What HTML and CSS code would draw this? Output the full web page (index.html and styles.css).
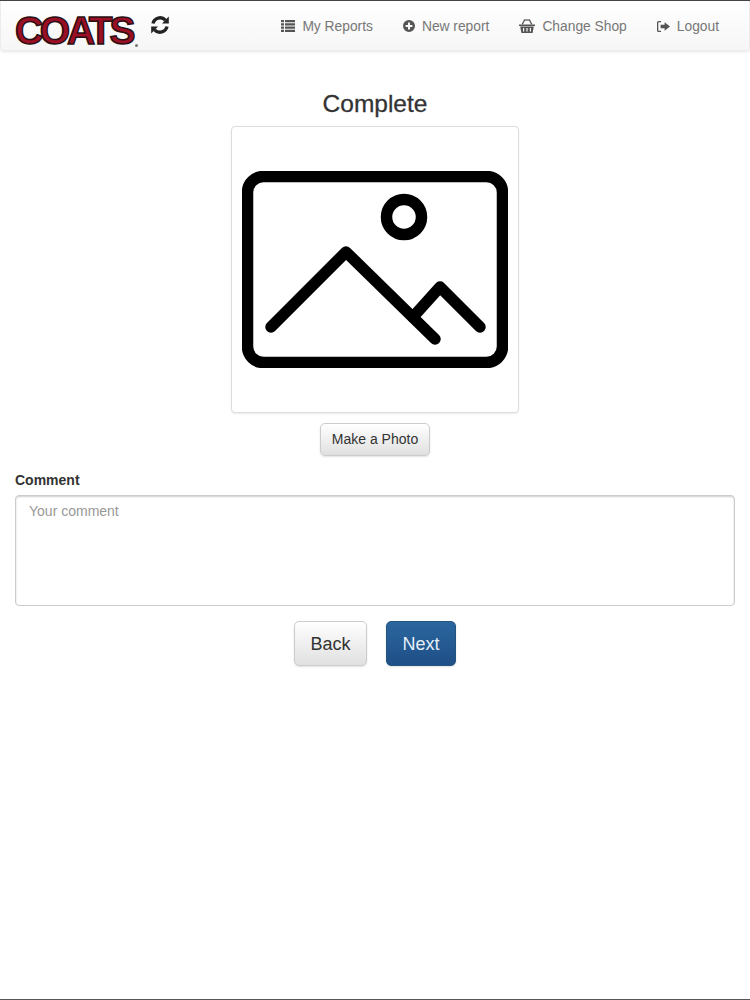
FILE: index.html
```html
<!DOCTYPE html>
<html lang="en">
<head>
    <meta charset="UTF-8">
    <meta name="viewport" content="width=device-width, initial-scale=1.0">
    <title>Complete</title>
    <link rel="stylesheet" href="styles.css">
</head>
<body>
    <div class="page">
        <nav class="navbar">
            <div class="brand">
                <div class="logo-box">
                    <span class="logo">coats</span>
                    <span class="logo-mark"></span>
                </div>
                <svg class="sync" viewBox="0 0 20 20" width="20" height="20">
                    <path d="M3 8.5 A7.2 7.2 0 0 1 15.4 5.2" class="sync-arc"/>
                    <path d="M18.8 1.6 V8.4 H12 Z" class="sync-head"/>
                    <path d="M17 11.5 A7.2 7.2 0 0 1 4.6 14.8" class="sync-arc"/>
                    <path d="M1.2 18.4 V11.6 H8 Z" class="sync-head"/>
                </svg>
            </div>
            <ul class="nav-links">
                <li class="nav-item">
                    <svg class="nav-icon" viewBox="0 0 14 12" width="14" height="12">
                        <path d="M0 0h3v2.2H0zM4 0h10v2.2H4zM0 3.3h3v2.2H0zM4 3.3h10v2.2H4zM0 6.6h3v2.2H0zM4 6.6h10v2.2H4zM0 9.8h3V12H0zM4 9.8h10V12H4z"/>
                    </svg>
                    My Reports
                </li>
                <li class="nav-item">
                    <svg class="nav-icon" viewBox="0 0 12 12" width="12" height="12">
                        <path fill-rule="evenodd" d="M6 0a6 6 0 1 1 0 12A6 6 0 0 1 6 0zM5 2.6V5H2.6v2H5v2.4h2V7h2.4V5H7V2.6z"/>
                    </svg>
                    New report
                </li>
                <li class="nav-item">
                    <svg class="nav-icon" viewBox="0 0 16 14" width="16" height="14">
                        <path d="M0 5.4h16v1.6H0zM1.2 7.6h13.6L13.6 14H2.4zM4 9v3.6h1.2V9zM7.4 9v3.6h1.2V9zM10.8 9v3.6H12V9z" fill-rule="evenodd"/>
                        <path d="M3.2 5.4 5.6 1M12.8 5.4 10.4 1" class="basket-handle"/>
                        <path d="M4.8 1h6.4" class="basket-handle"/>
                    </svg>
                    Change Shop
                </li>
                <li class="nav-item">
                    <svg class="nav-icon" viewBox="0 0 13 11" width="13" height="11">
                        <path d="M4 0H1.6A1.6 1.6 0 0 0 0 1.6v7.8A1.6 1.6 0 0 0 1.6 11H4V9.7H1.8a.5.5 0 0 1-.5-.5V1.8a.5.5 0 0 1 .5-.5H4z"/>
                        <path d="M7.6 1.2 13 5.5 7.6 9.8V7.2H3.6V3.8h4z"/>
                    </svg>
                    Logout
                </li>
            </ul>
        </nav>

        <main class="content">
            <h1 class="title">Complete</h1>
            <div class="thumbnail">
                <svg class="placeholder" viewBox="0 0 266 197" width="266" height="197">
                    <rect x="5.5" y="5.5" width="255" height="186" rx="16"/>
                    <circle cx="162" cy="46" r="17.5"/>
                    <path d="M29 156 L104 81 L193 168"/>
                    <path d="M171 146 L198 116 L238 156"/>
                </svg>
            </div>
            <button class="btn btn-small">Make a Photo</button>

            <form class="comment-form">
                <label class="comment-label" for="comment">Comment</label>
                <textarea class="comment-input" id="comment" placeholder="Your comment"></textarea>
                <div class="actions">
                    <button type="button" class="btn btn-large">Back</button>
                    <button type="button" class="btn btn-large btn-primary">Next</button>
                </div>
            </form>
        </main>
    </div>
</body>
</html>
```

FILE: styles.css
```css
html, body {
    margin: 0;
    padding: 0;
}
body {
    background: #fff;
    color: #333;
    font-family: "Liberation Sans", Arial, sans-serif;
}
.page {
    height: 1000px;
    box-sizing: border-box;
    border-top: 1px solid #444;
    border-bottom: 1px solid #555;
}

/* navbar */
.navbar {
    display: flex;
    justify-content: space-between;
    align-items: center;
    height: 50px;
    box-sizing: border-box;
    padding: 0 30px 0 15px;
    background: linear-gradient(to bottom, #fff, #f6f6f6);
    border: 1px solid #ececec;
    border-top: 0;
    border-radius: 0 0 4px 4px;
    box-shadow: 0 1px 3px rgba(0, 0, 0, .1);
}
.brand {
    display: flex;
    align-items: center;
    gap: 12px;
}
.logo-box {
    position: relative;
    width: 122px;
    height: 44px;
    margin-top: 1px;
}
.logo {
    display: block;
    margin-left: -1px;
    font-size: 39px;
    font-weight: bold;
    line-height: 54px;
    letter-spacing: -3.3px;
    text-transform: uppercase;
    color: #9b0f24;
    -webkit-text-stroke: 1.5px #2a1014;
    white-space: nowrap;
}
.logo-mark {
    position: absolute;
    right: 0;
    bottom: 1px;
    width: 3px;
    height: 3px;
    border-radius: 50%;
    background: #777;
}
.sync {
    margin-top: -1px;
}
.sync-arc {
    fill: none;
    stroke: #222;
    stroke-width: 3.4;
}
.sync-head {
    fill: #222;
}
.nav-links {
    display: flex;
    align-items: center;
    gap: 30px;
    margin: 1px 0 0;
    padding: 0;
    list-style: none;
}
.nav-item {
    display: flex;
    align-items: center;
    gap: 7px;
    font-size: 13.8px;
    color: #777;
}
.nav-icon {
    fill: #555;
}
.basket-handle {
    fill: none;
    stroke: #555;
    stroke-width: 1.2;
}

/* main content */
.content {
    display: flex;
    flex-direction: column;
    align-items: center;
    padding: 0 15px;
}
.title {
    margin: 39px 0 8px;
    font-size: 24.5px;
    font-weight: normal;
    line-height: 28px;
    color: #333;
    -webkit-text-stroke: .3px #333;
}
.thumbnail {
    display: flex;
    align-items: center;
    justify-content: center;
    width: 288px;
    height: 287px;
    box-sizing: border-box;
    background: #fff;
    border: 1px solid #ddd;
    border-radius: 4px;
    box-shadow: 0 1px 2px rgba(0, 0, 0, .08);
}
.placeholder {
    fill: none;
    stroke: #000;
    stroke-width: 11.5;
    stroke-linecap: round;
    stroke-linejoin: round;
}
.btn {
    box-sizing: border-box;
    font-family: "Liberation Sans", Arial, sans-serif;
    color: #333;
    background: linear-gradient(to bottom, #fff, #e0e0e0);
    border: 1px solid #ccc;
    border-radius: 5px;
    box-shadow: 0 1px 2px rgba(0, 0, 0, .12);
}
.btn-small {
    width: 110px;
    height: 33px;
    margin-top: 10px;
    padding-bottom: 3px;
    font-size: 14px;
}
.btn-large {
    width: 73px;
    height: 45px;
    padding-top: 3px;
    font-size: 18px;
}
.btn-primary {
    width: 70px;
    color: #e4eef7;
    background: linear-gradient(to bottom, #2b669f, #1f4f86);
    border-color: #245580;
}
.comment-form {
    align-self: stretch;
    display: flex;
    flex-direction: column;
}
.comment-label {
    margin-top: 16px;
    font-size: 14px;
    font-weight: bold;
    line-height: 17px;
}
.comment-input {
    height: 111px;
    margin-top: 6px;
    padding: 7px 13px;
    box-sizing: border-box;
    font-family: "Liberation Sans", Arial, sans-serif;
    font-size: 14px;
    color: #555;
    background: #fff;
    border: 1px solid #ccc;
    border-radius: 4px;
    box-shadow: inset 0 1px 2px rgba(0, 0, 0, .2);
    resize: none;
}
.comment-input::placeholder {
    color: #999;
    opacity: 1;
}
.actions {
    display: flex;
    justify-content: center;
    gap: 19px;
    margin-top: 15px;
}
```
